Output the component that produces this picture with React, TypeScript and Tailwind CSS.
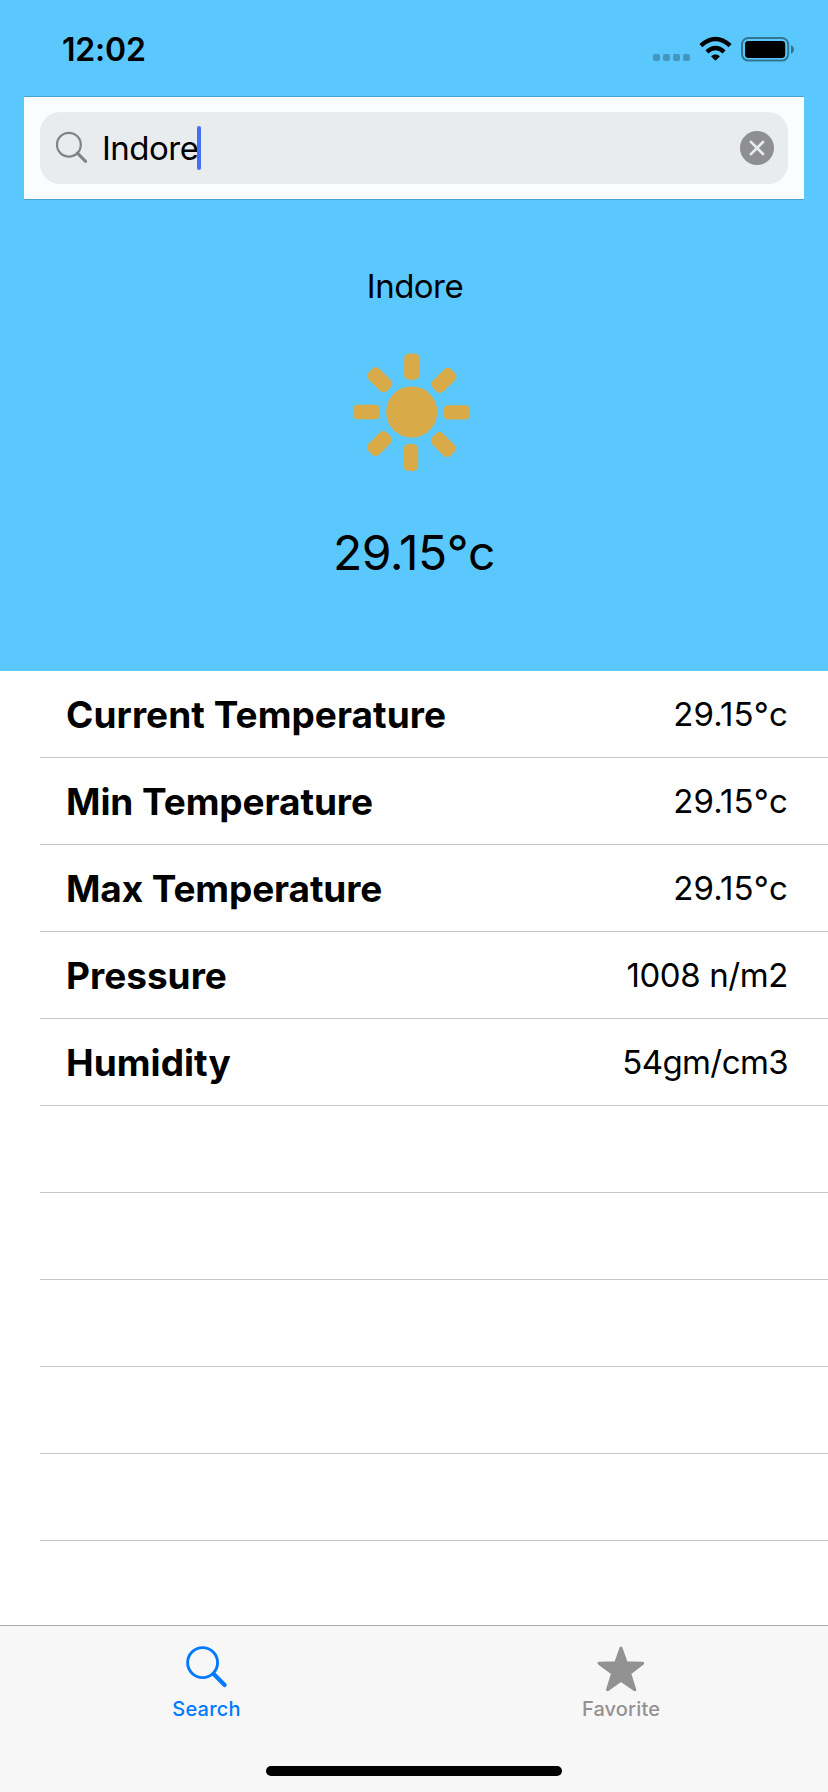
import React from "react";

const readings = [
  { label: "Current Temperature", value: "29.15°c", tracking: "tracking-[0.05px]", valueTracking: "tracking-[0.15px]" },
  { label: "Min Temperature", value: "29.15°c", tracking: "tracking-[-0.08px]", valueTracking: "tracking-[0.15px]" },
  { label: "Max Temperature", value: "29.15°c", tracking: "tracking-[-0.12px]", valueTracking: "tracking-[0.15px]" },
  { label: "Pressure", value: "1008 n/m2", tracking: "tracking-[0px]", valueTracking: "tracking-[-0.4px]" },
  { label: "Humidity", value: "54gm/cm3", tracking: "tracking-[0.05px]", valueTracking: "tracking-[-0.6px]" },
];

const emptyRows = [0, 1, 2, 3, 4];

function StatusBar() {
  return (
    <div className="flex h-24 shrink-0 items-start justify-between pt-[30px] pr-[34px] pl-[62px]">
      <span className="text-[32px] leading-10 font-semibold tracking-[-0.2px]">12:02</span>
      <svg width="142" height="26" viewBox="0 0 142 26" className="mt-[6px]">
        <g fill="#000" fillOpacity="0.25">
          <rect x="1" y="18" width="7" height="7" rx="2" />
          <rect x="11" y="18" width="7" height="7" rx="2" />
          <rect x="21" y="18" width="7" height="7" rx="2" />
          <rect x="31" y="18" width="7" height="7" rx="2" />
        </g>
        <path d="M63.5 24.8 L59.4 20.8 Q59 20.3 59.5 19.9 Q63.5 17 67.5 19.9 Q68 20.3 67.6 20.8 Z" />
        <path d="M54.9 15.9 Q63.5 8.3 72.1 15.9" fill="none" stroke="#000" strokeWidth="4.3" />
        <path d="M48.9 9.6 Q63.5 -3.6 78.1 9.6" fill="none" stroke="#000" strokeWidth="4.5" />
        <rect x="90" y="2" width="46.2" height="22.6" rx="6.4" fill="none" stroke="#000" strokeOpacity="0.42" strokeWidth="2" />
        <rect x="93" y="5" width="40.2" height="17" rx="3.4" />
        <path d="M139 9.2 C143 10.8 143 16.2 139 17.8 Z" fillOpacity="0.42" />
      </svg>
    </div>
  );
}

function SearchBar() {
  return (
    <div className="mx-6 flex h-[104px] shrink-0 items-center border-y border-[#4ba3cf] bg-[#fafdff] px-4">
      <div className="flex h-[72px] w-full items-center rounded-[20px] bg-[#e8ecef] pr-[14px] pl-[15px]">
        <svg width="34" height="34" viewBox="0 0 34 34" fill="none" stroke="#808286">
          <circle cx="13.9" cy="13.7" r="11.9" strokeWidth="2.2" />
          <path d="M22.4 22.2 L30.6 30.3" strokeWidth="3.1" strokeLinecap="round" />
        </svg>
        <span className="ml-[13px] w-[95px] text-[33px] leading-10 tracking-[-0.5px]">Indore</span>
        <span className="h-11 w-1 rounded-full bg-[#4670ef]" />
        <svg width="34" height="34" viewBox="0 0 34 34" className="ml-auto">
          <circle cx="17" cy="17" r="17" fill="#8e8e93" />
          <path d="M10.9 10.9 L23.1 23.1 M23.1 10.9 L10.9 23.1" stroke="#e8ecef" strokeWidth="2.7" strokeLinecap="round" />
        </svg>
      </div>
    </div>
  );
}

function SunIcon() {
  return (
    <svg width="118" height="118" viewBox="0 0 118 118" fill="#d8aa48" className="mr-[5px]">
      <circle cx="58.7" cy="59" r="25.6" />
      <rect x="51.2" y="0.5" width="15.2" height="26.2" rx="5" />
      <rect x="50.8" y="91" width="14.4" height="27" rx="5" />
      <rect x="0.2" y="51.8" width="26.2" height="14.4" rx="4" />
      <rect x="90.6" y="52.2" width="26.4" height="14.4" rx="4.6" />
      <rect x="-13" y="-7.6" width="26" height="15.2" rx="4.8" transform="translate(26.8 26.8) rotate(45)" />
      <rect x="-13" y="-7.6" width="26" height="15.2" rx="4.8" transform="translate(90.9 27.3) rotate(-45)" />
      <rect x="-13" y="-7.6" width="26" height="15.2" rx="4.8" transform="translate(26.5 90.6) rotate(-45)" />
      <rect x="-13" y="-7.6" width="26" height="15.2" rx="4.8" transform="translate(90.4 91.6) rotate(45)" />
    </svg>
  );
}

function TabBar() {
  return (
    <nav className="flex h-[167px] shrink-0 flex-col items-center border-t border-[#a9a9a9] bg-[#f7f7f7]">
      <div className="grid h-[140px] w-full grid-cols-2">
        <div className="flex flex-col items-center pt-[18px] text-[#007aff]">
          <svg width="44" height="44" viewBox="1 0 44 44" fill="none" stroke="currentColor">
            <circle cx="18.6" cy="18.6" r="15" strokeWidth="2.9" />
            <path d="M29.5 29.8 L40.6 41" strokeWidth="4.2" strokeLinecap="round" />
          </svg>
          <span className="mt-[9px] mr-[1px] text-[20px] leading-6 font-medium tracking-[0.2px]">Search</span>
        </div>
        <div className="flex flex-col items-center pt-[18px] text-[#929292]">
          <svg width="50" height="48" viewBox="0 0 50 48" fill="currentColor" stroke="currentColor" strokeWidth="3" strokeLinejoin="round">
            <path d="M25 4.1 L30.2 18.8 L46.7 19.2 L33.7 29.4 L38.8 45.7 L25 36.3 L11.5 45.7 L16.6 29.4 L3 19.2 L19.8 18.8 Z" />
          </svg>
          <span className="mt-[5px] text-[20px] leading-6 font-medium tracking-[0.15px]">Favorite</span>
        </div>
      </div>
      <div className="h-[10px] w-[296px] rounded-full bg-black" />
    </nav>
  );
}

export default function App() {
  return (
    <main className="flex h-[1792px] w-[828px] flex-col overflow-hidden bg-white font-['Inter',sans-serif] text-black">
      <header className="flex h-[671px] shrink-0 flex-col bg-[#5ac8fd]">
        <StatusBar />
        <SearchBar />
        <section className="flex flex-col items-center pt-[66px]">
          <h1 className="pl-[2px] text-[33px] leading-10 tracking-[-0.5px]">Indore</h1>
          <div className="mt-[47px] flex h-[118px]">
            <SunIcon />
          </div>
          <p className="mt-[52px] text-[48px] leading-[60px] tracking-[-0.5px]">29.15°c</p>
        </section>
      </header>
      <ul className="grow pl-10">
        {readings.map((row) => (
          <li key={row.label} className="flex h-[87px] items-center justify-between border-b border-[#c6c6c8] pr-10 pl-[26px]">
            <span className={`pt-[2px] text-[37px] leading-[50px] font-bold ${row.tracking}`}>{row.label}</span>
            <span className={`text-[33px] leading-10 ${row.valueTracking}`}>{row.value}</span>
          </li>
        ))}
        {emptyRows.map((row) => (
          <li key={row} className="h-[87px] border-b border-[#c6c6c8]" />
        ))}
      </ul>
      <TabBar />
    </main>
  );
}
